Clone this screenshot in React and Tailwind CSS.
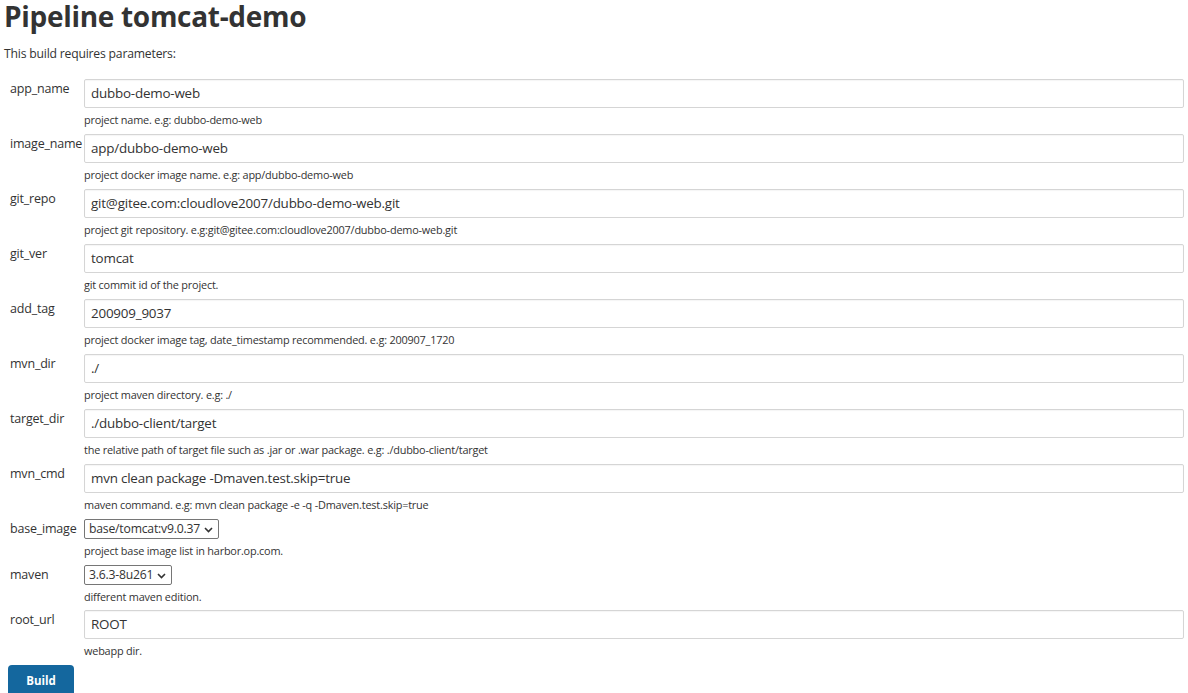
import React from "react";

const rows = [
  { name: "app_name", value: "dubbo-demo-web", help: "project name. e.g: dubbo-demo-web" },
  { name: "image_name", value: "app/dubbo-demo-web", help: "project docker image name. e.g: app/dubbo-demo-web" },
  { name: "git_repo", value: "git@gitee.com:cloudlove2007/dubbo-demo-web.git", help: "project git repository. e.g:git@gitee.com:cloudlove2007/dubbo-demo-web.git" },
  { name: "git_ver", value: "tomcat", help: "git commit id of the project." },
  { name: "add_tag", value: "200909_9037", help: "project docker image tag, date_timestamp recommended. e.g: 200907_1720" },
  { name: "mvn_dir", value: "./", help: "project maven directory. e.g: ./" },
  { name: "target_dir", value: "./dubbo-client/target", help: "the relative path of target file such as .jar or .war package. e.g: ./dubbo-client/target" },
  { name: "mvn_cmd", value: "mvn clean package -Dmaven.test.skip=true", help: "maven command. e.g: mvn clean package -e -q -Dmaven.test.skip=true" },
  { name: "base_image", select: "base/tomcat:v9.0.37", help: "project base image list in harbor.op.com." },
  { name: "maven", select: "3.6.3-8u261", help: "different maven edition." },
  { name: "root_url", value: "ROOT", help: "webapp dir." },
];

function Chevron() {
  return (
    <svg width="9" height="6" viewBox="0 0 9 6" className="ml-[4px] mt-[1px]">
      <path d="M1 1 L4.5 4.5 L8 1" fill="none" stroke="#333" strokeWidth="1.6" />
    </svg>
  );
}

export default function App() {
  return (
    <div className="bg-white text-[#333] min-h-[693px] overflow-hidden" style={{ fontFamily: '"Open Sans", "Noto Sans", sans-serif' }}>
      <div className="h-[32px] flex items-center">
        <h1 className="text-[28px] font-bold leading-[40px] pl-[4px] text-[#333] tracking-[-0.3px]">Pipeline tomcat-demo</h1>
      </div>
      <p className="text-[12.2px] leading-[16px] pl-[4px] mt-[14px] tracking-[-0.2px]">This build requires parameters:</p>
      <div className="mt-[17px] grid grid-cols-[74px_1fr] pl-[10px] pr-[4px]">
        {rows.map((r) => (
          <React.Fragment key={r.name}>
            <div className="text-[12.5px] leading-[18px] pt-[1px] tracking-[-0.2px]">{r.name}</div>
            <div>
              {r.select ? (
                <div className="flex w-fit items-center h-[20px] border border-[#767676] rounded-[2px] pl-[4px] pr-[5px] text-[12.2px] tracking-[-0.2px]">
                  {r.select}
                  <Chevron />
                </div>
              ) : (
                <div className="flex items-center h-[29px] border border-[#d5d5d5] rounded-[2px] px-[6px] text-[13.4px] tracking-[-0.2px] shadow-[inset_0_1px_1px_rgba(0,0,0,0.04)]">
                  {r.value}
                </div>
              )}
              <div className={`text-[10.9px] leading-[15px] mt-[4px] tracking-[-0.2px] ${r.name === "maven" ? "mb-[6px]" : "mb-[7px]"}`}>{r.help}</div>
            </div>
          </React.Fragment>
        ))}
      </div>
      <button className="ml-[8px] mt-0 w-[66px] h-[34px] bg-[#14679e] text-white text-[11.5px] font-bold rounded-[4px] pb-[3px]">Build</button>
    </div>
  );
}
